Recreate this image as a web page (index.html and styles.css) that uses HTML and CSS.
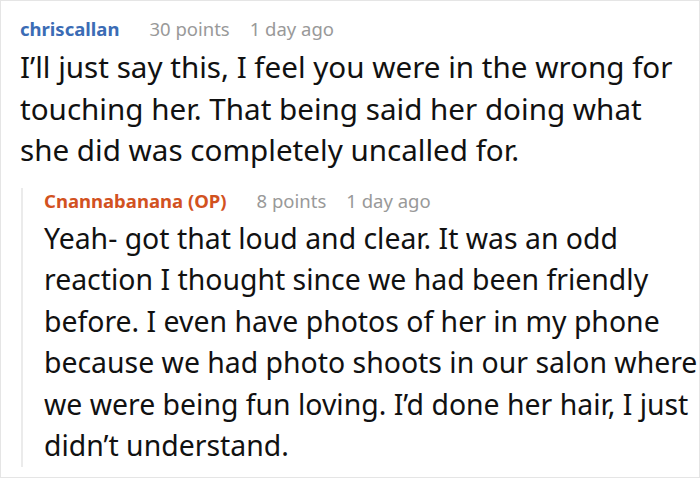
FILE: index.html
```html
<!DOCTYPE html>
<html>
<head>
<meta charset="utf-8">
<link rel="stylesheet" href="styles.css">
</head>
<body>
<div class="frame">
  <div class="comment">
    <div class="meta">
      <span class="user">chriscallan</span>
      <span class="info">30 points</span>
      <span class="info">1 day ago</span>
    </div>
    <p class="text">I’ll just say this, I feel you were in the wrong for touching her. That being said her doing what she did was completely uncalled for.</p>
  </div>
  <div class="reply">
    <div class="meta">
      <span class="user op">Cnannabanana (OP)</span>
      <span class="info">8 points</span>
      <span class="info">1 day ago</span>
    </div>
    <p class="text">Yeah- got that loud and clear. It was an odd reaction I thought since we had been friendly before. I even have photos of her in my phone because we had photo shoots in our salon where we were being fun loving. I’d done her hair, I just didn’t understand.</p>
  </div>
</div>
</body>
</html>
```
FILE: styles.css
```css
html, body {
  margin: 0;
  padding: 0;
  background: #fff;
}
body {
  font-family: "Noto Sans", "Open Sans", sans-serif;
  color: #111;
}
.frame {
  width: 700px;
  height: 478px;
  box-sizing: border-box;
  border: 1px solid #e5e5e5;
  padding: 15px 0 0 19px;
  overflow: hidden;
}
.comment {
  padding-right: 8px;
}
.meta {
  display: flex;
  gap: 20px;
  font-size: 18.5px;
  line-height: 26px;
}
.user {
  font-weight: 700;
  color: #3b6cb5;
  margin-right: 10px;
}
.user.op {
  color: #d2521f;
}
.info {
  color: #999;
}
.text {
  margin: 4px 0 0;
  font-size: 29.6px;
  line-height: 41.5px;
}
.reply {
  margin: 17px 0 0 1px;
  border-left: 2px solid #ebebeb;
  padding-left: 21px;
}
.reply .text {
  font-size: 28.4px;
  margin-right: -8px;
}
```
